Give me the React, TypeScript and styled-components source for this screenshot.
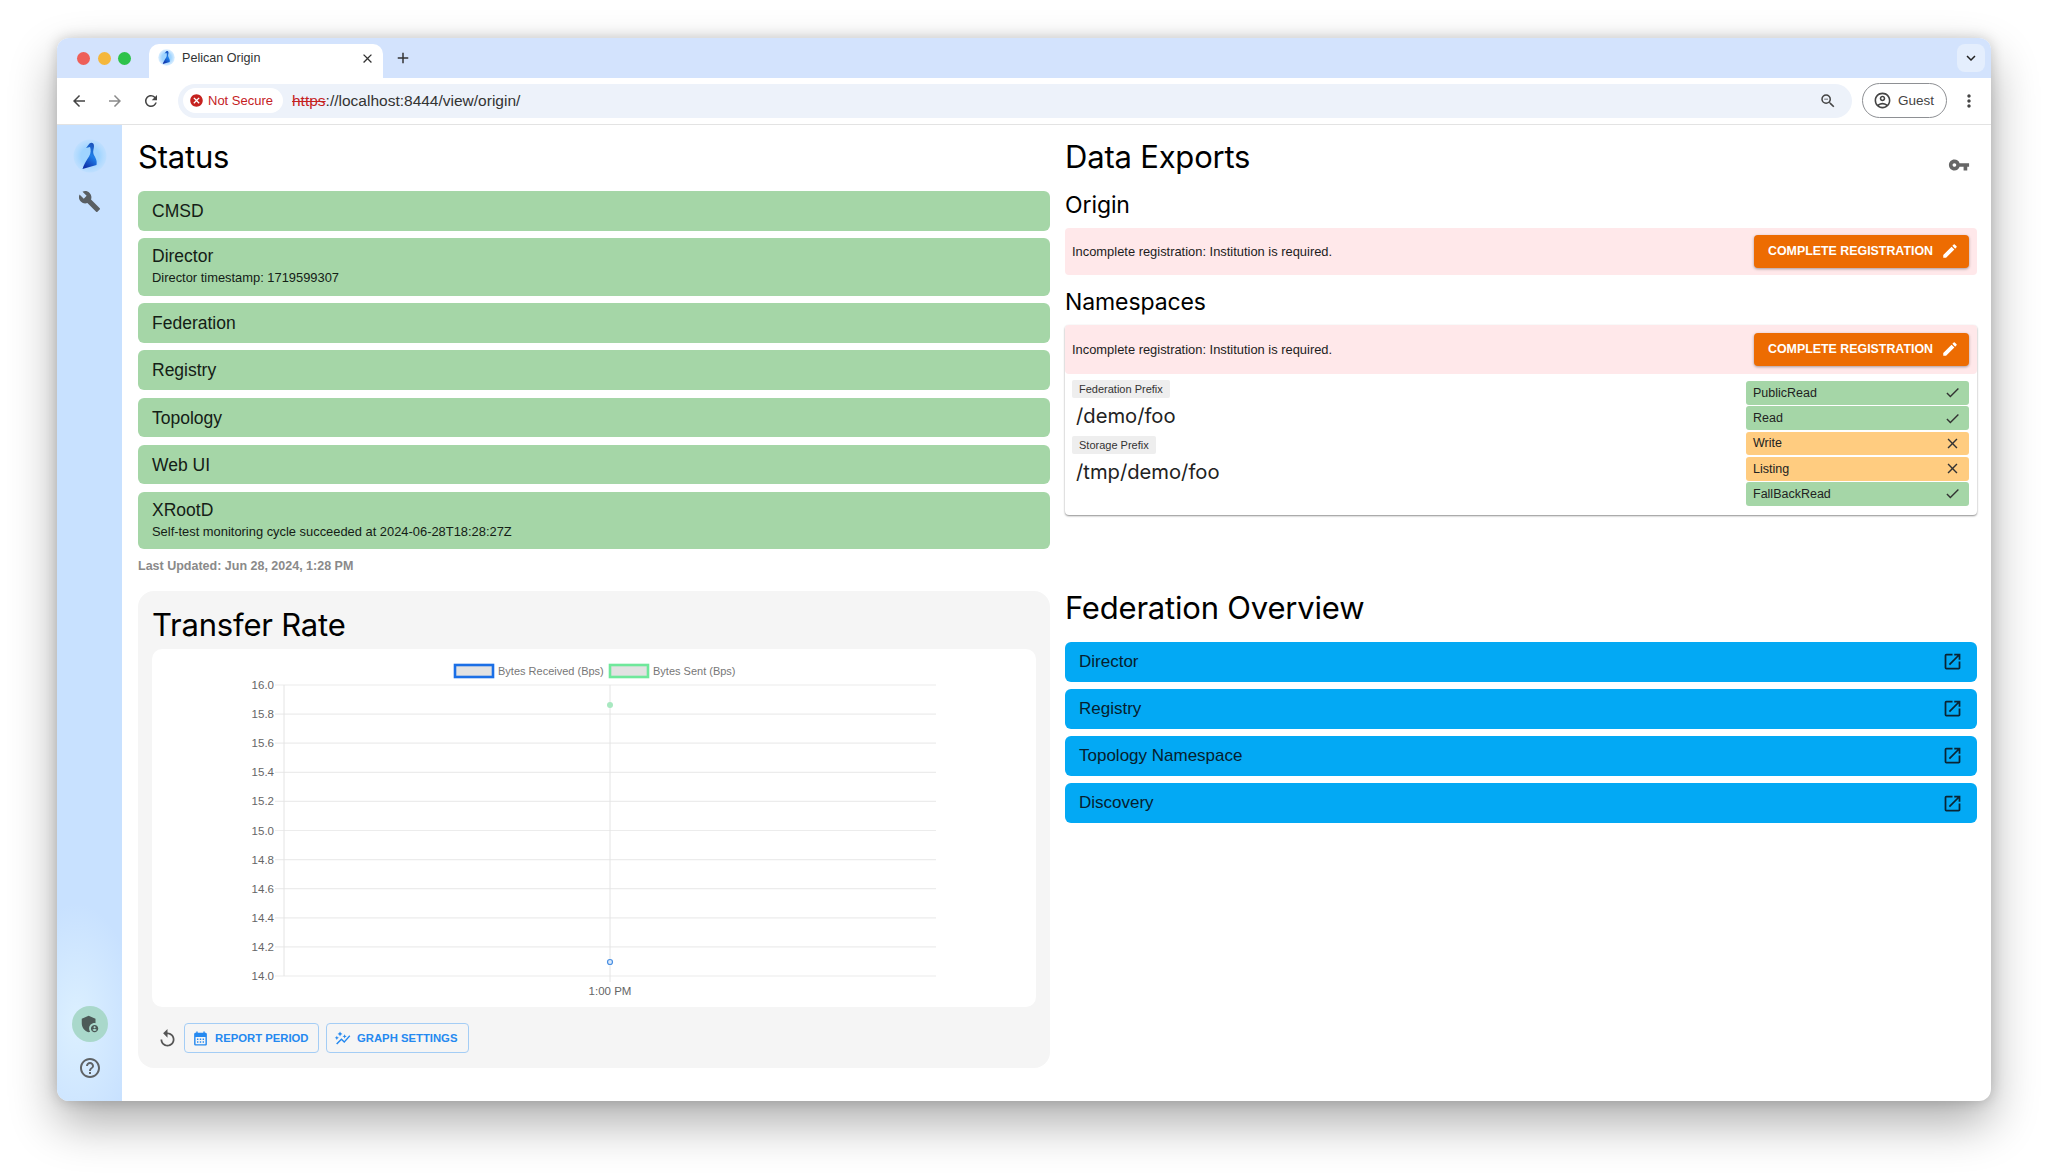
import React from 'react';
import styled, { createGlobalStyle } from 'styled-components';
import {
  MdAdd,
  MdAdminPanelSettings,
  MdArrowBack,
  MdArrowForward,
  MdAutoGraph,
  MdBuild,
  MdCalendarMonth,
  MdCancel,
  MdCheck,
  MdClose,
  MdEdit,
  MdExpandMore,
  MdHelpOutline,
  MdMoreVert,
  MdOpenInNew,
  MdOutlineAccountCircle,
  MdRefresh,
  MdReplay,
  MdVpnKey,
  MdZoomOut,
} from 'react-icons/md';

const GlobalStyle = createGlobalStyle`
  html, body {
    margin: 0;
    background: #fff;
  }
  * {
    box-sizing: border-box;
  }
`;

const Stage = styled.div`
  width: 2048px;
  height: 1176px;
  padding: 38px 57px 75px;
  font-family: 'Liberation Sans', Arial, sans-serif;
  color: #111;
`;

const BrowserWindow = styled.div`
  height: 1063px;
  border-radius: 12px;
  overflow: hidden;
  background: #fff;
  box-shadow: 0 22px 48px rgba(0, 0, 0, 0.32), 0 0 14px rgba(0, 0, 0, 0.18);
  display: flex;
  flex-direction: column;
`;

const TabStrip = styled.div`
  height: 40px;
  flex: none;
  background: #d3e3fd;
  display: flex;
  align-items: flex-end;
  padding-left: 20px;
  position: relative;
`;

const Lights = styled.div`
  display: flex;
  gap: 7.5px;
  align-self: center;
  width: 72px;
`;

const Light = styled.span<{ $color: string }>`
  width: 13px;
  height: 13px;
  border-radius: 50%;
  background: ${(p) => p.$color};
`;

const Tab = styled.div`
  width: 234px;
  height: 34px;
  background: #fff;
  border-radius: 10px 10px 0 0;
  display: flex;
  align-items: center;
  padding: 0 8px 6px 9px;
  font-size: 12.6px;
  color: #333;
`;

const TabTitle = styled.span`
  flex: 1;
  margin-left: 7px;
`;

const NewTab = styled.span`
  display: flex;
  align-self: center;
  margin-left: 11px;
  color: #333;
  font-size: 18px;
`;

const TabListButton = styled.span`
  position: absolute;
  right: 6px;
  top: 6px;
  width: 28px;
  height: 28px;
  border-radius: 8px;
  background: #e4eefd;
  display: flex;
  align-items: center;
  justify-content: center;
  font-size: 18px;
  color: #222;
`;

const Toolbar = styled.div`
  height: 47px;
  flex: none;
  display: flex;
  align-items: center;
  padding: 0 12px 1px 4px;
  border-bottom: 1px solid #e3e3e3;
  background: #fff;
`;

const NavButton = styled.span<{ $dim?: boolean }>`
  width: 36px;
  display: flex;
  justify-content: center;
  font-size: 18px;
  color: ${(p) => (p.$dim ? '#8a8a8a' : '#444')};
`;

const Omnibox = styled.div`
  margin-left: 9px;
  flex: 1;
  height: 34px;
  border-radius: 17px;
  background: #edf2fa;
  display: flex;
  align-items: center;
  padding: 0 15px 0 5px;
`;

const SecurityChip = styled.span`
  height: 25px;
  width: 100px;
  border-radius: 13px;
  background: #fff;
  color: #c5221f;
  font-size: 13px;
  display: flex;
  align-items: center;
  gap: 4px;
  padding-left: 6px;
  svg {
    font-size: 15px;
  }
`;

const Url = styled.span`
  flex: 1;
  margin-left: 9px;
  font-size: 15.5px;
  color: #333;
`;

const Scheme = styled.span`
  color: #c5221f;
  text-decoration: line-through;
`;

const ZoomIcon = styled.span`
  display: flex;
  font-size: 18px;
  color: #444;
`;

const GuestPill = styled.span`
  margin-left: 10px;
  width: 85px;
  height: 35px;
  border: 1px solid #8e9094;
  border-radius: 18px;
  display: flex;
  align-items: center;
  gap: 6px;
  padding-left: 10px;
  font-size: 13.5px;
  color: #444;
  svg {
    font-size: 19px;
  }
`;

const MoreIcon = styled.span`
  display: flex;
  margin-left: 12px;
  font-size: 20px;
  color: #444;
`;

const Body = styled.div`
  flex: 1;
  min-height: 0;
  display: flex;
`;

const Sidebar = styled.nav`
  width: 65px;
  flex: none;
  background: radial-gradient(60px 120px at 30% 92%, #dcf0ff 0%, rgba(220, 240, 255, 0) 100%), #c8e1ff;
  display: flex;
  flex-direction: column;
  align-items: center;
  padding-top: 14px;
`;

const Logo = styled.svg<{ $size: number }>`
  flex: none;
  width: ${(p) => p.$size}px;
  height: ${(p) => (p.$size * 36) / 34}px;
`;

const ToolIcon = styled.span`
  display: flex;
  margin-top: 15px;
  font-size: 23px;
  color: #5a5f63;
`;

const AdminBadge = styled.span`
  margin-top: auto;
  width: 36px;
  height: 36px;
  border-radius: 50%;
  background: #a9d8cb;
  display: flex;
  align-items: center;
  justify-content: center;
  font-size: 22px;
  color: #4d5a58;
`;

const HelpIcon = styled.span`
  display: flex;
  margin: 14px 0 21px;
  font-size: 24px;
  color: #5f6366;
`;

const Content = styled.main`
  flex: 1;
  display: grid;
  grid-template-columns: 912px 912px;
  column-gap: 15px;
  padding-left: 16px;
`;

const Column = styled.section`
  display: flex;
  flex-direction: column;
`;

const PageTitle = styled.h1`
  margin: 0;
  height: 66px;
  line-height: 63px;
  font-family: 'Inter', sans-serif;
  font-weight: 400;
  font-size: 31px;
  letter-spacing: -0.2px;
  color: #000;
`;

const SectionTitle = styled.h2`
  margin: 0;
  height: 32px;
  line-height: 32px;
  font-family: 'Inter', sans-serif;
  font-weight: 400;
  font-size: 23px;
  letter-spacing: -0.1px;
  color: #000;
`;

const StatusList = styled.div`
  display: flex;
  flex-direction: column;
  gap: 7.5px;
`;

const StatusRow = styled.div<{ $tall: boolean }>`
  height: ${(p) => (p.$tall ? 57.5 : 39.7)}px;
  border-radius: 6px;
  background: #a5d6a7;
  padding: ${(p) => (p.$tall ? '7px' : '9px')} 14px 0;
`;

const StatusName = styled.div`
  font-size: 17.5px;
  line-height: 22px;
  color: #142016;
`;

const StatusNote = styled.div`
  font-size: 12.9px;
  line-height: 16px;
  margin-top: 3px;
  color: #142016;
`;

const Updated = styled.div`
  margin-top: 9px;
  font-size: 12.5px;
  line-height: 16px;
  font-weight: 700;
  color: #8a8a8a;
`;

const RatePanel = styled.div`
  margin-top: 17px;
  height: 477px;
  border-radius: 16px;
  background: #f5f5f5;
  padding: 0 14px;
  display: flex;
  flex-direction: column;
`;

const PanelTitle = styled(PageTitle)`
  height: 58px;
  line-height: 68px;
`;

const ChartCard = styled.div`
  height: 358px;
  flex: none;
  background: #fff;
  border-radius: 10px;
`;

const ChartSvg = styled.svg`
  display: block;
  width: 100%;
  height: 100%;
  font-family: 'Liberation Sans', Arial, sans-serif;
`;

const ChartControls = styled.div`
  display: flex;
  align-items: center;
  gap: 7px;
  margin-top: 16px;
  padding-left: 5px;
`;

const ResetIcon = styled.span`
  display: flex;
  font-size: 21px;
  color: #555;
  margin-right: -1px;
`;

const OutlineButton = styled.button<{ $width: number }>`
  width: ${(p) => p.$width}px;
  height: 30px;
  padding: 0 0 0 7px;
  border: 1.5px solid #a4cdf5;
  border-radius: 4px;
  background: transparent;
  color: #2589f0;
  font-family: inherit;
  font-size: 11.3px;
  font-weight: 700;
  display: flex;
  align-items: center;
  gap: 6px;
  svg {
    font-size: 17px;
  }
`;

const ExportHead = styled.div`
  height: 64px;
  display: flex;
  justify-content: space-between;
  align-items: flex-start;
`;

const KeyIcon = styled.span`
  display: flex;
  margin: 29px 7px 0 0;
  font-size: 22px;
  color: #666;
`;

const Alert = styled.div<{ $height: number }>`
  height: ${(p) => p.$height}px;
  flex: none;
  padding: 0 8px 0 7px;
  border-radius: 4px;
  background: #ffe8ea;
  display: flex;
  align-items: center;
  justify-content: space-between;
  font-size: 12.9px;
  color: #1c1c1c;
`;

const OriginAlert = styled(Alert)`
  margin-top: 7px;
`;

const RegisterButton = styled.button`
  width: 215px;
  height: 33px;
  border: 0;
  border-radius: 4px;
  padding: 0 0 1px 4px;
  background: #ed6c02;
  color: #fff;
  box-shadow: 0 1px 3px rgba(0, 0, 0, 0.35);
  font-family: inherit;
  font-size: 12.4px;
  font-weight: 700;
  display: flex;
  align-items: center;
  justify-content: center;
  gap: 8px;
  svg {
    font-size: 18px;
  }
`;

const NamespaceTitle = styled(SectionTitle)`
  margin: 12px 0 6px;
  line-height: 30px;
`;

const NamespaceCard = styled.div`
  flex: none;
  height: 190px;
  border-radius: 4px;
  background: #fff;
  box-shadow: 0 1px 2px rgba(0, 0, 0, 0.45);
  display: flex;
  flex-direction: column;
`;

const NamespaceBody = styled.div`
  display: flex;
  justify-content: space-between;
  padding: 7px 8px 0 7px;
`;

const Prefixes = styled.div`
  display: flex;
  flex-direction: column;
  align-items: flex-start;
  margin-top: -1px;
`;

const PrefixChip = styled.span`
  height: 18px;
  padding: 0 7px;
  border-radius: 2px;
  background: #eeeeee;
  font-size: 11px;
  line-height: 18px;
  color: #333;
`;

const PrefixValue = styled.div`
  height: 38px;
  line-height: 36px;
  padding-left: 4px;
  font-family: 'Inter', sans-serif;
  font-size: 20.2px;
  color: #222;
`;

const Permissions = styled.div`
  width: 223px;
  display: flex;
  flex-direction: column;
  gap: 1.6px;
`;

const Permission = styled.div<{ $ok: boolean }>`
  height: 23.7px;
  padding: 0 8px 0 7px;
  border-radius: 3px;
  background: ${(p) => (p.$ok ? '#a5d6a7' : '#ffcc80')};
  display: flex;
  align-items: center;
  justify-content: space-between;
  font-size: 12.5px;
  color: #222;
  svg {
    font-size: 17px;
    color: #333;
  }
`;

const OverviewTitle = styled(PageTitle)`
  margin-top: 61px;
`;

const LinkList = styled.div`
  display: flex;
  flex-direction: column;
  gap: 7.5px;
`;

const LinkRow = styled.a`
  height: 39.6px;
  padding: 0 14px;
  border-radius: 6px;
  background: #03a9f4;
  color: #06202e;
  font-size: 17px;
  display: flex;
  align-items: center;
  justify-content: space-between;
  svg {
    font-size: 21px;
    color: #0a2433;
  }
`;

const statuses = [
  { name: 'CMSD' },
  { name: 'Director', note: 'Director timestamp: 1719599307' },
  { name: 'Federation' },
  { name: 'Registry' },
  { name: 'Topology' },
  { name: 'Web UI' },
  { name: 'XRootD', note: 'Self-test monitoring cycle succeeded at 2024-06-28T18:28:27Z' },
];

const permissions = [
  { name: 'PublicRead', ok: true },
  { name: 'Read', ok: true },
  { name: 'Write', ok: false },
  { name: 'Listing', ok: false },
  { name: 'FallBackRead', ok: true },
];

const links = ['Director', 'Registry', 'Topology Namespace', 'Discovery'];

const ticks = ['16.0', '15.8', '15.6', '15.4', '15.2', '15.0', '14.8', '14.6', '14.4', '14.2', '14.0'];

const PLOT = { left: 132, right: 784, top: 36, bottom: 327 };

const TransferChart: React.FC = () => {
  const step = (PLOT.bottom - PLOT.top) / (ticks.length - 1);
  return (
    <ChartSvg viewBox="0 0 884 358">
      <rect x="303" y="16" width="38" height="12" fill="#e2e2e2" stroke="#1b6fe6" strokeWidth="2.6" />
      <text x="346" y="26" fontSize="11" fill="#777">Bytes Received (Bps)</text>
      <rect x="458" y="16" width="38" height="12" fill="#e2e2e2" stroke="#6fe89b" strokeWidth="2.6" />
      <text x="501" y="26" fontSize="11" fill="#777">Bytes Sent (Bps)</text>
      {ticks.map((t, i) => {
        const y = PLOT.top + i * step;
        return (
          <g key={t}>
            <line x1={PLOT.left - 9} x2={PLOT.right} y1={y} y2={y} stroke="#ececec" strokeWidth="1.2" />
            <text x={PLOT.left - 10} y={y + 4} fontSize="11.5" fill="#666" textAnchor="end">{t}</text>
          </g>
        );
      })}
      <line x1={PLOT.left} x2={PLOT.left} y1={PLOT.top} y2={PLOT.bottom} stroke="#e4e4e4" />
      <line x1="458" x2="458" y1={PLOT.top} y2={PLOT.bottom + 6} stroke="#e4e4e4" />
      <circle cx="458" cy="56" r="3" fill="#a8e8c0" />
      <circle cx="458" cy="313" r="2.5" fill="#dbe9fb" stroke="#4a90e2" strokeWidth="1.2" />
      <text x="458" y="346" fontSize="11.5" fill="#666" textAnchor="middle">1:00 PM</text>
    </ChartSvg>
  );
};

const PelicanMark: React.FC<{ size?: number }> = ({ size = 34 }) => (
  <Logo viewBox="0 0 34 36" $size={size}>
    <defs>
      <radialGradient id={`halo${size}`}>
        <stop offset="0.55" stopColor="#9fd4ff" />
        <stop offset="1" stopColor="#b4dcff" stopOpacity="0.5" />
      </radialGradient>
      <linearGradient id={`bird${size}`} x1="0.3" y1="1" x2="0.7" y2="0">
        <stop offset="0" stopColor="#0f2fa8" />
        <stop offset="0.55" stopColor="#1f7fe8" />
        <stop offset="1" stopColor="#1b4fb8" />
      </linearGradient>
    </defs>
    <circle cx="17" cy="17" r="16.5" fill={`url(#halo${size})`} />
    <path
      d="M13 9 L16.5 4.5 C18.5 3 21 4 21 7 C21 10 19.5 12 20.5 15 C21.8 18 24.5 21 23.5 26 L9.5 30 C10.5 26 13.5 21.5 16 17.5 C18 14 18 10.5 17 8 Z"
      fill={`url(#bird${size})`}
    />
  </Logo>
);

const App: React.FC = () => {
  return (
    <Stage>
      <GlobalStyle />
      <BrowserWindow>
        <TabStrip>
          <Lights>
            <Light $color="#ee5f58" />
            <Light $color="#f5b73c" />
            <Light $color="#2dc24a" />
          </Lights>
          <Tab>
            <PelicanMark size={17} />
            <TabTitle>Pelican Origin</TabTitle>
            <MdClose size={15} />
          </Tab>
          <NewTab>
            <MdAdd />
          </NewTab>
          <TabListButton>
            <MdExpandMore />
          </TabListButton>
        </TabStrip>
        <Toolbar>
          <NavButton>
            <MdArrowBack />
          </NavButton>
          <NavButton $dim>
            <MdArrowForward />
          </NavButton>
          <NavButton>
            <MdRefresh />
          </NavButton>
          <Omnibox>
            <SecurityChip>
              <MdCancel />
              Not Secure
            </SecurityChip>
            <Url>
              <Scheme>https</Scheme>://localhost:8444/view/origin/
            </Url>
            <ZoomIcon>
              <MdZoomOut />
            </ZoomIcon>
          </Omnibox>
          <GuestPill>
            <MdOutlineAccountCircle />
            Guest
          </GuestPill>
          <MoreIcon>
            <MdMoreVert />
          </MoreIcon>
        </Toolbar>
        <Body>
          <Sidebar>
            <PelicanMark />
            <ToolIcon>
              <MdBuild />
            </ToolIcon>
            <AdminBadge>
              <MdAdminPanelSettings />
            </AdminBadge>
            <HelpIcon>
              <MdHelpOutline />
            </HelpIcon>
          </Sidebar>
          <Content>
            <Column>
              <PageTitle>Status</PageTitle>
              <StatusList>
                {statuses.map((s) => (
                  <StatusRow key={s.name} $tall={Boolean(s.note)}>
                    <StatusName>{s.name}</StatusName>
                    {s.note && <StatusNote>{s.note}</StatusNote>}
                  </StatusRow>
                ))}
              </StatusList>
              <Updated>Last Updated: Jun 28, 2024, 1:28 PM</Updated>
              <RatePanel>
                <PanelTitle>Transfer Rate</PanelTitle>
                <ChartCard>
                  <TransferChart />
                </ChartCard>
                <ChartControls>
                  <ResetIcon>
                    <MdReplay />
                  </ResetIcon>
                  <OutlineButton $width={135}>
                    <MdCalendarMonth />
                    REPORT PERIOD
                  </OutlineButton>
                  <OutlineButton $width={143}>
                    <MdAutoGraph />
                    GRAPH SETTINGS
                  </OutlineButton>
                </ChartControls>
              </RatePanel>
            </Column>
            <Column>
              <ExportHead>
                <PageTitle>Data Exports</PageTitle>
                <KeyIcon>
                  <MdVpnKey />
                </KeyIcon>
              </ExportHead>
              <SectionTitle>Origin</SectionTitle>
              <OriginAlert $height={47}>
                Incomplete registration: Institution is required.
                <RegisterButton>
                  COMPLETE REGISTRATION
                  <MdEdit />
                </RegisterButton>
              </OriginAlert>
              <NamespaceTitle>Namespaces</NamespaceTitle>
              <NamespaceCard>
                <Alert $height={49}>
                  Incomplete registration: Institution is required.
                  <RegisterButton>
                    COMPLETE REGISTRATION
                    <MdEdit />
                  </RegisterButton>
                </Alert>
                <NamespaceBody>
                  <Prefixes>
                    <PrefixChip>Federation Prefix</PrefixChip>
                    <PrefixValue>/demo/foo</PrefixValue>
                    <PrefixChip>Storage Prefix</PrefixChip>
                    <PrefixValue>/tmp/demo/foo</PrefixValue>
                  </Prefixes>
                  <Permissions>
                    {permissions.map((p) => (
                      <Permission key={p.name} $ok={p.ok}>
                        {p.name}
                        {p.ok ? <MdCheck /> : <MdClose />}
                      </Permission>
                    ))}
                  </Permissions>
                </NamespaceBody>
              </NamespaceCard>
              <OverviewTitle>Federation Overview</OverviewTitle>
              <LinkList>
                {links.map((l) => (
                  <LinkRow key={l}>
                    {l}
                    <MdOpenInNew />
                  </LinkRow>
                ))}
              </LinkList>
            </Column>
          </Content>
        </Body>
      </BrowserWindow>
    </Stage>
  );
};

export default App;
